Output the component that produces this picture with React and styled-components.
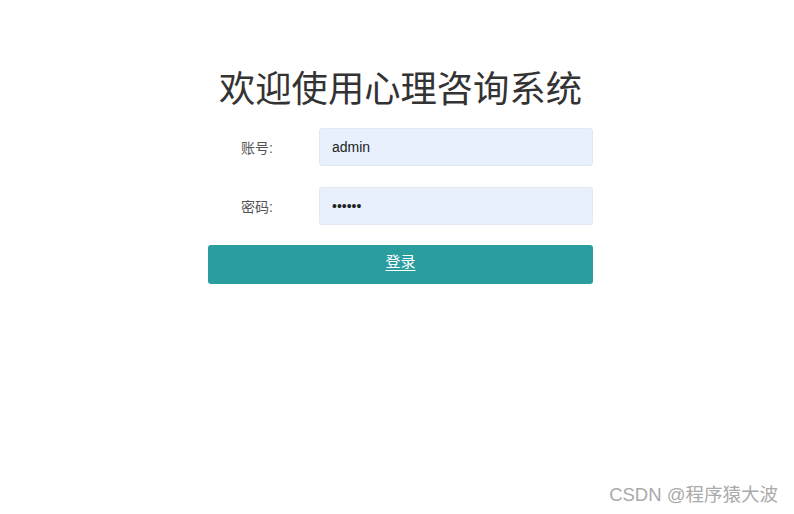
import React from "react";
import styled, { createGlobalStyle } from "styled-components";

const GlobalStyle = createGlobalStyle`
  html, body {
    margin: 0;
    padding: 0;
    background: #fff;
    font-family: "Liberation Sans", Arial, "Noto Sans CJK SC", sans-serif;
  }
`;

const Page = styled.div`
  position: relative;
  width: 794px;
  height: 514px;
  padding-left: 7px;
  box-sizing: border-box;
  overflow: hidden;
`;

const LoginBox = styled.div`
  width: 385px;
  margin: 0 auto;
  padding-top: 61px;
  display: flex;
  flex-direction: column;
`;

const Title = styled.h1`
  margin: 0 0 17px;
  font-size: 36.3px;
  line-height: 50px;
  font-weight: 400;
  color: #333;
  text-align: center;
  font-family: "Noto Sans CJK SC", sans-serif;
  white-space: nowrap;
`;

const FormRow = styled.div`
  display: flex;
  align-items: center;
  height: 38px;
  margin-bottom: ${({ last }) => (last ? "20px" : "21px")};
`;

const Label = styled.label`
  width: 111px;
  padding-left: 33px;
  box-sizing: border-box;
  font-size: 14px;
  color: #555;
  font-family: "Liberation Sans", "Noto Sans CJK SC", sans-serif;
`;

const Input = styled.input`
  flex: 1;
  height: 38px;
  box-sizing: border-box;
  border: 1px solid #e2e8f0;
  border-radius: 3px;
  background: #e8f0fe;
  padding: 0 12px;
  font-size: 14px;
  color: #222;
  font-family: "Liberation Sans", Arial, sans-serif;
  outline: none;
`;

const SubmitButton = styled.button`
  height: 39px;
  border: none;
  border-radius: 3px;
  background: #2a9d9f;
  color: #fff;
  font-size: 15px;
  line-height: 1;
  padding: 0 0 8px;
  font-family: "Noto Sans CJK SC", sans-serif;
  text-decoration: underline;
  text-underline-offset: 3px;
  cursor: pointer;
`;

const Watermark = styled.div`
  position: absolute;
  right: 16px;
  bottom: 8px;
  font-size: 18.5px;
  color: #aaa;
  font-family: "Liberation Sans", "Noto Sans CJK SC", sans-serif;
`;

export default function App() {
  return (
    <Page>
      <GlobalStyle />
      <LoginBox>
        <Title>欢迎使用心理咨询系统</Title>
        <FormRow>
          <Label>账号:</Label>
          <Input type="text" defaultValue="admin" />
        </FormRow>
        <FormRow last>
          <Label>密码:</Label>
          <Input type="password" defaultValue="123456" />
        </FormRow>
        <SubmitButton>登录</SubmitButton>
      </LoginBox>
      <Watermark>CSDN @程序猿大波</Watermark>
    </Page>
  );
}
